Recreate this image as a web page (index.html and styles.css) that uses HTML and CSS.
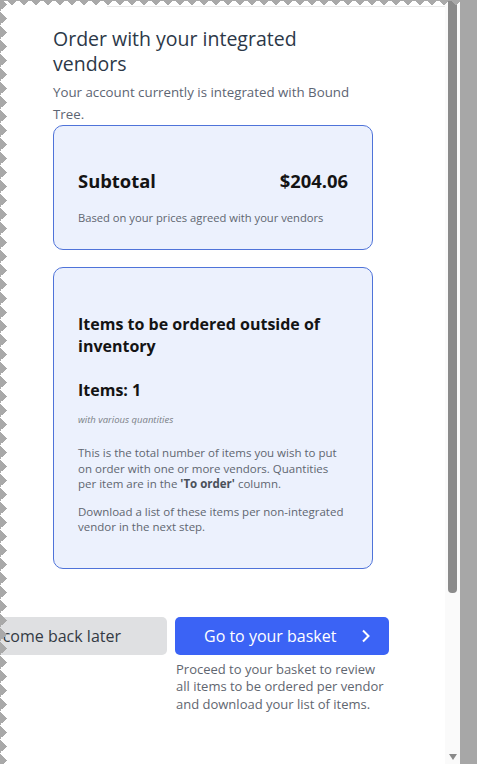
FILE: index.html
```html
<!DOCTYPE html>
<html lang="en">
<head>
    <meta charset="UTF-8">
    <meta name="viewport" content="width=device-width, initial-scale=1.0">
    <title>Order with your integrated vendors</title>
    <link rel="stylesheet" href="styles.css">
</head>
<body>

    <div class="window">
        <div class="page">
            <div class="sheet-edge"></div>

            <main class="panel">
                <h1 class="title">Order with your integrated vendors</h1>
                <p class="subtitle">Your account currently is integrated with Bound Tree.</p>

                <section class="card">
                    <div class="subtotal-row">
                        <span>Subtotal</span>
                        <span>$204.06</span>
                    </div>
                    <p class="card-note">Based on your prices agreed with your vendors</p>
                </section>

                <section class="card card-items">
                    <h2 class="card-title">Items to be ordered outside of inventory</h2>
                    <p class="items-count">Items: 1</p>
                    <p class="quantities">with various quantities</p>
                    <p class="card-text">This is the total number of items you wish to put on order with one or more vendors. Quantities per item are in the <b>'To order'</b> column.</p>
                    <p class="card-text second">Download a list of these items per non-integrated vendor in the next step.</p>
                </section>

                <div class="actions">
                    <button type="button" class="btn btn-later">I'll come back later</button>
                    <button type="button" class="btn btn-basket">
                        <span>Go to your basket</span>
                        <svg width="10" height="14" viewBox="0 0 10 14"><path d="M2 1.5l5.5 5.5-5.5 5.5" fill="none" stroke="#fff" stroke-width="2"/></svg>
                    </button>
                    <p class="hint">Proceed to your basket to review all items to be ordered per vendor and download your list of items.</p>
                </div>
            </main>
        </div>

        <div class="scrollbar">
            <div class="thumb"></div>
            <div class="arrow"></div>
        </div>
        <div class="gutter"></div>
    </div>

    <!-- torn edges of the capture -->
    <div class="tear-top"></div>
    <div class="tear-left"></div>

</body>
</html>
```

FILE: styles.css
```css
body {
    font-family: 'Open Sans', 'Noto Sans', sans-serif;
    background-color: #ffffff;
    margin: 0;
    padding: 0;
    width: 477px;
    height: 764px;
    overflow: hidden;
    position: relative;
}

.window {
    display: flex;
    height: 764px;
}

.page {
    width: 445px;
    flex: none;
    overflow: hidden;
}

.sheet-edge {
    height: 1px;
    margin: 6px 0 0 107px;
    background-color: #e8e8e8;
}

.panel {
    padding: 19px 0 0 53px;
}

.title {
    max-width: 300px;
    margin: 0;
    font-size: 19.5px;
    line-height: 25px;
    font-weight: 400;
    color: #2c3848;
}

.subtitle {
    width: 320px;
    margin: 5px 0 0;
    font-size: 13.3px;
    line-height: 22px;
    color: #5d6573;
}

.card {
    width: 320px;
    box-sizing: border-box;
    margin-top: 0;
    padding: 43px 24px 23px;
    background-color: #ecf1fd;
    border: 1px solid #4f73d9;
    border-radius: 10px;
}

.subtotal-row {
    display: flex;
    justify-content: space-between;
    font-size: 18.4px;
    line-height: 24px;
    font-weight: 700;
    color: #141414;
}

.card-note {
    margin: 17px 0 0;
    font-size: 11.2px;
    line-height: 16px;
    color: #5f6670;
}

.card-items {
    margin-top: 17px;
    padding: 45px 24px 33px;
}

.card-title,
.items-count {
    margin: 0;
    font-size: 16px;
    line-height: 22px;
    font-weight: 700;
    color: #141414;
}

.items-count {
    margin-top: 22px;
}

.quantities {
    margin: 12px 0 0;
    font-size: 9.5px;
    line-height: 14px;
    font-style: italic;
    color: #7a7f86;
}

.card-text {
    margin: 18px 0 0;
    font-size: 11.5px;
    line-height: 15.5px;
    color: #5f6670;
}

.card-text b {
    color: #4a5059;
}

.card-text.second {
    margin-top: 12px;
}

.actions {
    display: grid;
    grid-template-columns: 241px 214px;
    column-gap: 8px;
    margin: 48px 0 0 -127px;
}

.btn {
    height: 38px;
    border: none;
    border-radius: 5px;
    font-family: inherit;
    font-size: 16px;
    cursor: pointer;
    display: flex;
    align-items: center;
}

.btn-later {
    justify-content: flex-end;
    padding: 0 46px 0 0;
    background-color: #dfe0e2;
    color: #333a44;
}

.btn-basket {
    justify-content: space-between;
    padding: 0 18px 0 29px;
    background-color: #3b63f5;
    color: white;
}

.hint {
    grid-column: 2;
    margin: 6px 0 0;
    padding-left: 1px;
    font-size: 13px;
    line-height: 17.5px;
    color: #5f6670;
}

.scrollbar {
    width: 15px;
    flex: none;
    display: flex;
    flex-direction: column;
    align-items: center;
    background-color: #fafafa;
}

.thumb {
    width: 9px;
    height: 593px;
    background-color: #8b8b8b;
    border-radius: 0 0 4px 4px;
}

.arrow {
    margin-top: auto;
    margin-bottom: 4px;
    width: 0;
    height: 0;
    border-left: 4px solid transparent;
    border-right: 4px solid transparent;
    border-top: 6px solid #8a8a8a;
}

.gutter {
    flex: 1;
    background-color: #a7a7a7;
}

.tear-top {
    position: absolute;
    top: 0;
    left: 0;
    width: 460px;
    height: 7px;
    background:
        linear-gradient(#a9a9a9, #a9a9a9) 0 0 / 100% 1px no-repeat,
        linear-gradient(135deg, #a9a9a9 25%, transparent 25%) 0 0 / 12px 12px repeat-x,
        linear-gradient(225deg, #a9a9a9 25%, transparent 25%) 0 0 / 12px 12px repeat-x;
}

.tear-left {
    position: absolute;
    top: 0;
    left: 0;
    width: 8px;
    height: 764px;
    background:
        linear-gradient(135deg, #a9a9a9 25%, transparent 25%) 0 4px / 14px 14px repeat-y,
        linear-gradient(45deg, #a9a9a9 25%, transparent 25%) 0 4px / 14px 14px repeat-y;
}
```
